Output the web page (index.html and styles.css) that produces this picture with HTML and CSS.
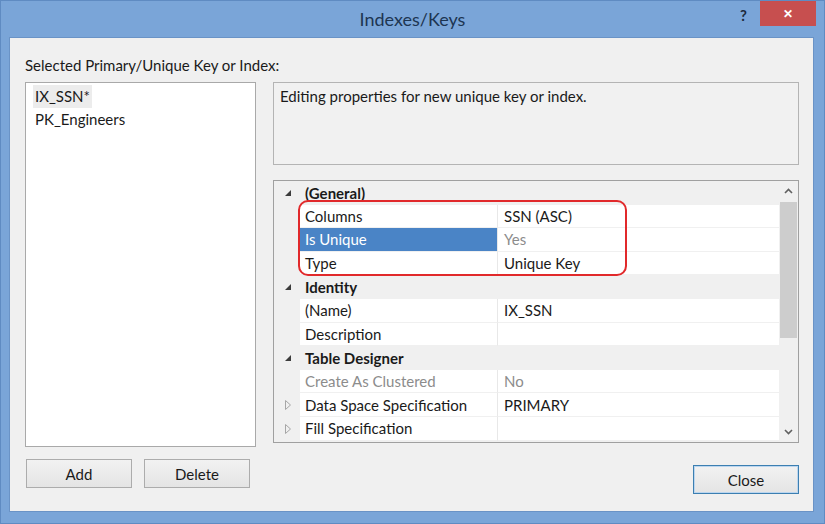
FILE: index.html
```html
<!DOCTYPE html>
<html lang="en">
<head>
    <meta charset="UTF-8">
    <title>Indexes/Keys</title>
    <link rel="stylesheet" href="styles.css">
</head>
<body>
    <div class="window">
        <!-- Barre de titre -->
        <div class="titlebar">
            <span class="title">Indexes/Keys</span>
            <span class="help">?</span>
            <span class="close-x">&#x2715;</span>
        </div>

        <div class="client">
            <div class="label">Selected Primary/Unique Key or Index:</div>

            <div class="listbox">
                <div class="item selected">IX_SSN*</div>
                <div class="item">PK_Engineers</div>
            </div>

            <div class="right">
                <div class="desc">Editing properties for new unique key or index.</div>

                <div class="props">
                    <div class="rows">
                        <div class="row cat">
                            <span class="glyph"><svg width="6" height="6" viewBox="0 0 6 6"><polygon points="6,0 6,6 0,6" fill="#3c3c3c"/></svg></span>
                            <span class="name">(General)</span>
                        </div>
                        <div class="row">
                            <span class="glyph"></span>
                            <span class="name">Columns</span>
                            <span class="value">SSN (ASC)</span>
                        </div>
                        <div class="row">
                            <span class="glyph"></span>
                            <span class="name hl">Is Unique</span>
                            <span class="value dim">Yes</span>
                        </div>
                        <div class="row">
                            <span class="glyph"></span>
                            <span class="name">Type</span>
                            <span class="value">Unique Key</span>
                        </div>
                        <div class="row cat">
                            <span class="glyph"><svg width="6" height="6" viewBox="0 0 6 6"><polygon points="6,0 6,6 0,6" fill="#3c3c3c"/></svg></span>
                            <span class="name">Identity</span>
                        </div>
                        <div class="row">
                            <span class="glyph"></span>
                            <span class="name">(Name)</span>
                            <span class="value">IX_SSN</span>
                        </div>
                        <div class="row">
                            <span class="glyph"></span>
                            <span class="name">Description</span>
                            <span class="value"></span>
                        </div>
                        <div class="row cat">
                            <span class="glyph"><svg width="6" height="6" viewBox="0 0 6 6"><polygon points="6,0 6,6 0,6" fill="#3c3c3c"/></svg></span>
                            <span class="name">Table Designer</span>
                        </div>
                        <div class="row">
                            <span class="glyph"></span>
                            <span class="name dim">Create As Clustered</span>
                            <span class="value dim">No</span>
                        </div>
                        <div class="row">
                            <span class="glyph"><svg width="6" height="10" viewBox="0 0 6 10"><polygon points="0.5,0.5 5.5,5 0.5,9.5" fill="none" stroke="#a6a6a6"/></svg></span>
                            <span class="name">Data Space Specification</span>
                            <span class="value">PRIMARY</span>
                        </div>
                        <div class="row">
                            <span class="glyph"><svg width="6" height="10" viewBox="0 0 6 10"><polygon points="0.5,0.5 5.5,5 0.5,9.5" fill="none" stroke="#a6a6a6"/></svg></span>
                            <span class="name">Fill Specification</span>
                            <span class="value"></span>
                        </div>
                    </div>

                    <div class="scrollbar">
                        <span class="arrow"><svg width="9" height="6" viewBox="0 0 9 6"><polyline points="1,5 4.5,1.5 8,5" fill="none" stroke="#606060" stroke-width="1.6"/></svg></span>
                        <div class="track"><div class="thumb"></div></div>
                        <span class="arrow"><svg width="9" height="6" viewBox="0 0 9 6"><polyline points="1,1 4.5,4.5 8,1" fill="none" stroke="#606060" stroke-width="1.6"/></svg></span>
                    </div>

                    <!-- Annotation rouge -->
                    <div class="callout"></div>
                </div>
            </div>

            <div class="buttons-left">
                <button class="btn">Add</button>
                <button class="btn">Delete</button>
            </div>
            <div class="buttons-right">
                <button class="btn default">Close</button>
            </div>
        </div>
    </div>
</body>
</html>
```

FILE: styles.css
```css
/* Fenêtre de dialogue */
body {
    margin: 0;
    padding: 0;
    font-family: 'Lato', 'Open Sans', sans-serif;
    font-size: 15px;
    color: #1a1a1a;
}

.window {
    width: 825px;
    height: 524px;
    box-sizing: border-box;
    background-color: #7aa5d8;
    border: 1px solid #5f8bc2;
    display: flex;
    flex-direction: column;
}

.titlebar {
    height: 36px;
    display: flex;
    align-items: center;
    justify-content: center;
    position: relative;
}

.title {
    font-size: 18px;
    color: #1d3552;
}

.help {
    position: absolute;
    right: 77px;
    top: 5px;
    font-weight: bold;
    font-size: 15px;
    color: #1d2b3c;
}

.close-x {
    position: absolute;
    right: 8px;
    top: 0;
    width: 56px;
    height: 25px;
    background-color: #c74f4f;
    color: #ffffff;
    font-size: 12px;
    font-weight: bold;
    display: flex;
    align-items: center;
    justify-content: center;
}

/* Zone client */
.client {
    flex: 1;
    margin: 0 10px 11px 8px;
    background-color: #f0f0f0;
    border: 1px solid #6a93c6;
    display: grid;
    grid-template-columns: 231px 526px;
    grid-template-rows: 27px 365px 1fr;
    column-gap: 17px;
    padding: 17px 0 17px 15px;
    box-sizing: border-box;
}

.label {
    grid-column: 1 / 3;
    line-height: 20px;
    white-space: nowrap;
}

.listbox {
    grid-row: 2;
    background-color: #ffffff;
    border: 1px solid #a9a9a9;
    padding: 2px 0 0 7px;
    box-sizing: border-box;
    height: 365px;
}

.item {
    height: 23px;
    line-height: 23px;
    padding: 0 2px;
    display: table;
}

.item.selected {
    background-color: #ececec;
}

.right {
    grid-row: 2;
    display: flex;
    flex-direction: column;
    gap: 15px;
}

.desc {
    height: 83px;
    box-sizing: border-box;
    border: 1px solid #b4b4b4;
    background-color: #f1f1f1;
    padding: 3px 6px;
    line-height: 20px;
}

/* Grille des propriétés */
.props {
    position: relative;
    height: 263px;
    box-sizing: border-box;
    border: 1px solid #a0a0a0;
    display: flex;
    overflow: hidden;
}

.rows {
    flex: 1;
    background-color: #f0f0f0;
}

.row {
    height: 23.6px;
    display: grid;
    grid-template-columns: 26px 198px 1fr;
    box-sizing: border-box;
}

.row > span {
    display: flex;
    align-items: center;
    white-space: nowrap;
}

.glyph {
    justify-content: center;
    padding-left: 2px;
}

.row .name {
    background-color: #ffffff;
    padding-left: 5px;
    border-bottom: 1px solid #f0f0f0;
    border-right: 1px solid #e8e8e8;
}

.row .value {
    background-color: #ffffff;
    padding-left: 6px;
    border-bottom: 1px solid #f0f0f0;
}

.row.cat .name {
    background-color: transparent;
    border: none;
    font-weight: bold;
    grid-column: 2 / 4;
}

.row .name.hl {
    background-color: #4a84c6;
    color: #ffffff;
}

.dim {
    color: #8c8c8c;
}

.scrollbar {
    width: 19px;
    background-color: #f0f0f0;
    display: flex;
    flex-direction: column;
    align-items: center;
}

.arrow {
    height: 20px;
    display: flex;
    align-items: center;
}

.track {
    flex: 1;
    width: 17px;
}

.thumb {
    height: 136px;
    margin-top: 1px;
    background-color: #cdcdcd;
}

.callout {
    position: absolute;
    left: 24px;
    top: 19px;
    width: 329px;
    height: 76px;
    box-sizing: border-box;
    border: 2px solid #e1292b;
    border-radius: 10px;
}

/* Boutons */
.buttons-left {
    grid-row: 3;
    display: flex;
    gap: 12px;
    align-items: flex-start;
    margin-top: 12px;
    padding-left: 1px;
}

.buttons-right {
    grid-row: 3;
    grid-column: 2;
    display: flex;
    justify-content: flex-end;
    align-items: flex-end;
}

.btn {
    width: 106px;
    height: 29px;
    font-family: inherit;
    font-size: 15px;
    color: #1a1a1a;
    border: 1px solid #acacac;
    background: linear-gradient(#f2f2f2, #e4e4e4);
    padding: 0;
}

.btn.default {
    border-color: #3c7fb1;
    box-shadow: inset 0 0 0 1px #bcd6ef;
}
```
